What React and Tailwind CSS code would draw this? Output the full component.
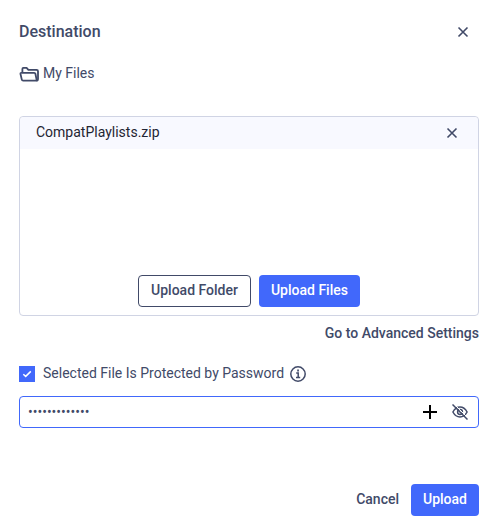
import React from "react";

function CloseIcon() {
    return (
        <svg width="12" height="12" viewBox="0 0 12 12" fill="none" stroke="currentColor" strokeWidth="1.6">
            <path d="M1.5 1.5l9 9M10.5 1.5l-9 9" />
        </svg>
    );
}

function FolderIcon() {
    return (
        <svg width="20" height="16" viewBox="0 0 20 16" fill="none" stroke="currentColor" strokeWidth="1.8" strokeLinejoin="round">
            <path d="M3.4 6V2.9Q3.4 1.9 4.4 1.9H7.6L9.4 3.9H17.6Q19 3.9 19 5.2V13.2Q19 14.6 17.6 14.6" />
            <path d="M2.4 6.8H15.2Q16.2 6.8 16.4 7.7L17.8 14.6H4.2Q3 14.6 2.8 13.6L1.5 8Q1.3 6.8 2.4 6.8Z" />
        </svg>
    );
}

function InfoIcon() {
    return (
        <svg width="16" height="16" viewBox="0 0 16 16" fill="none" stroke="currentColor" strokeWidth="1.5">
            <circle cx="8" cy="8" r="7.2" />
            <path d="M6.2 7H8.2V11.5M6 11.5H10.2" />
            <path d="M7.2 4.5H8.9" strokeWidth="1.8" />
        </svg>
    );
}

function EyeOffIcon() {
    return (
        <svg width="16" height="16" viewBox="0 0 16 16" fill="none" stroke="currentColor" strokeWidth="1.5">
            <path d="M0.9 8Q3.6 3 8 3T15.1 8Q12.4 13 8 13T0.9 8Z" />
            <circle cx="8" cy="8" r="2.4" />
            <path d="M2 0L16 14" stroke="white" strokeWidth="1" />
            <path d="M0.5 0.5L15.5 15.5" />
        </svg>
    );
}

function App() {
    return (
        <main className="bg-white px-[19px] pt-5 pb-4 font-[Roboto,sans-serif] text-sm leading-5 text-[#414a68]">
            <header className="flex items-center justify-between pr-[10px]">
                <h1 className="text-base leading-6 font-medium">Destination</h1>
                <button type="button" aria-label="Close">
                    <CloseIcon />
                </button>
            </header>

            <div className="mt-[19px] flex items-center gap-1">
                <FolderIcon />
                <span className="pb-0.5">My Files</span>
            </div>

            <section className="mt-[31px] flex min-h-[200px] flex-col justify-between rounded border border-[#d0d4e4] pb-2">
                <div className="flex h-8 items-center justify-between rounded-t bg-[#f8f9ff] pr-5 pl-4 text-[#1f2533]">
                    <span className="pb-0.5">CompatPlaylists.zip</span>
                    <button type="button" aria-label="Remove file" className="text-[#414a68]">
                        <CloseIcon />
                    </button>
                </div>
                <div className="flex justify-center gap-2">
                    <button type="button" className="h-8 rounded border border-[#414a68] px-3 pb-0.5 font-medium">
                        Upload Folder
                    </button>
                    <button type="button" className="h-8 rounded bg-[#4168fb] px-3 pb-0.5 font-medium text-white">
                        Upload Files
                    </button>
                </div>
            </section>

            <div className="mt-[7px] flex justify-end">
                <a href="#advanced" className="font-medium">
                    Go to Advanced Settings
                </a>
            </div>

            <div className="mt-5 flex items-center">
                <span className="relative flex">
                    <input
                        id="protected"
                        type="checkbox"
                        defaultChecked
                        className="size-4 appearance-none border border-[#4168fb] checked:bg-[#4168fb]"
                    />
                    <svg className="pointer-events-none absolute inset-0" width="16" height="16" viewBox="0 0 16 16" fill="none" stroke="white" strokeWidth="1.5">
                        <path d="M4.3 8.2L6.7 10.4L11.8 5.4" />
                    </svg>
                </span>
                <label htmlFor="protected" className="ml-2 pb-0.5">
                    Selected File Is Protected by Password
                </label>
                <button type="button" aria-label="Password info" className="ml-[6px]">
                    <InfoIcon />
                </button>
            </div>

            <div className="mt-[11px] flex h-8 items-center rounded border border-[#4168fb] pr-[10px] pl-2">
                <input
                    type="password"
                    aria-label="Password"
                    defaultValue="abcdefghijklm"
                    className="min-w-0 flex-1 outline-none"
                />
                <button type="button" aria-label="Add password" className="mr-[15px] text-black">
                    <svg width="14" height="14" viewBox="0 0 14 14" stroke="currentColor" strokeWidth="2">
                        <path d="M7 0V14M0 7H14" />
                    </svg>
                </button>
                <button type="button" aria-label="Show password">
                    <EyeOffIcon />
                </button>
            </div>

            <footer className="mt-14 flex items-center justify-end gap-3">
                <button type="button" className="h-8 pb-0.5 font-medium">
                    Cancel
                </button>
                <button type="button" className="h-8 rounded bg-[#4168fb] px-3 pb-0.5 font-medium text-white">
                    Upload
                </button>
            </footer>
        </main>
    );
}

export default App;
